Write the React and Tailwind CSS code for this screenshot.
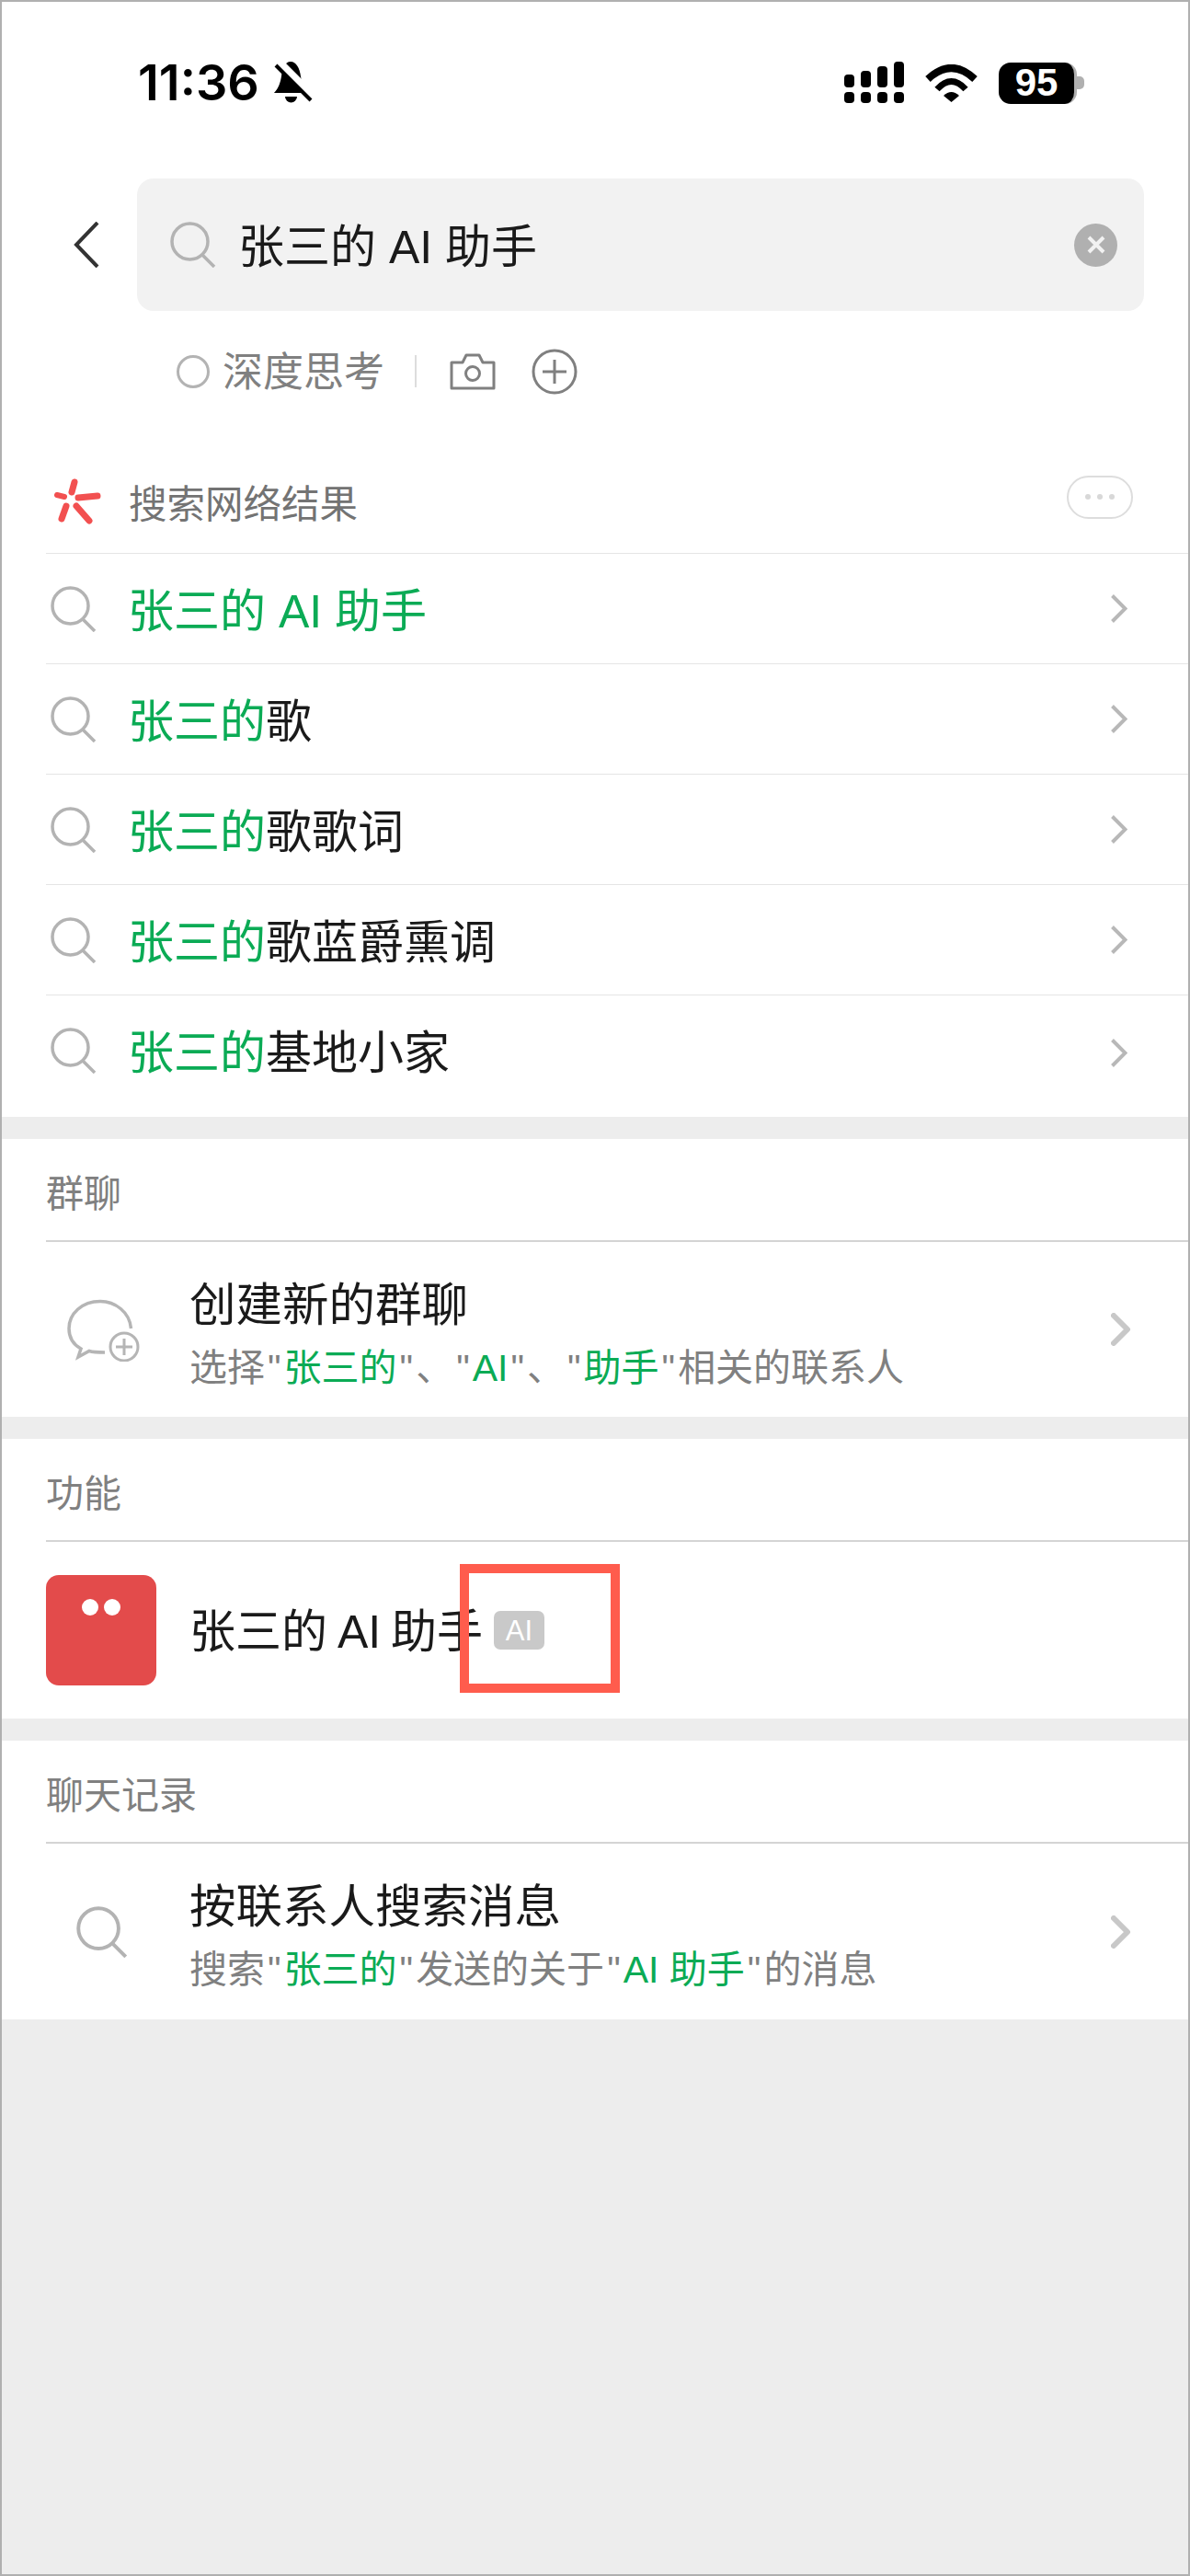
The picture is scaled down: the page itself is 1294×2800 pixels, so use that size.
const green = "text-[#0bab55]";

function SearchIcon({ size = 50 }) {
  return (
    <svg width={size} height={size} viewBox="0 0 50 50" fill="none" stroke="#b3b3b3" strokeWidth="3.5" className="shrink-0">
      <circle cx="21.5" cy="21.5" r="19.5" />
      <path d="M35 36 L48 49" />
    </svg>
  );
}

function Chevron({ big }) {
  if (big) {
    return (
      <svg width="22" height="36" viewBox="0 0 22 36" fill="none" stroke="#c8c8c8" strokeWidth="6" strokeLinecap="round" strokeLinejoin="round" className="shrink-0">
        <path d="M3 3 L18 18 L3 33" />
      </svg>
    );
  }
  return (
    <svg width="18" height="31" viewBox="0 0 18 31" fill="none" stroke="#b8b8b8" strokeWidth="4" className="shrink-0">
      <path d="M1.5 1.5 L15.5 15.5 L1.5 29.5" />
    </svg>
  );
}

function StatusBar() {
  return (
    <div className="h-[192px] pt-[60px] pl-[148px] pr-[113px]">
      <div className="h-[56px] flex items-center justify-between">
        <div className="flex items-center">
          <span className="w-[134px] whitespace-nowrap font-['Inter',sans-serif] text-[54px] leading-none font-semibold text-black">11:36</span>
          <svg width="70" height="70" viewBox="0 0 70 70" className="-ml-[1px] shrink-0">
            <path d="M33 12 C39 12 43 19 44 28 C45 36 50 42 54 46 L15 46 C20 41 22 34 23 28 C24 19 27 12 33 12 Z" fill="#000" />
            <path d="M27 50 H40 A6.5 6.5 0 0 1 27 50 Z" fill="#000" />
            <path d="M18 11 L60 53" stroke="#fff" strokeWidth="10" />
            <path d="M17 16 L55 54" stroke="#000" strokeWidth="4" />
          </svg>
        </div>
        <div className="flex items-center">
          <svg width="66" height="46" viewBox="0 0 66 46" fill="#000" className="shrink-0">
            <rect x="0" y="14" width="11" height="14" rx="4" />
            <rect x="18" y="10" width="11" height="18" rx="4" />
            <rect x="36" y="5" width="11" height="23" rx="4" />
            <rect x="54" y="0" width="11" height="28" rx="4" />
            <rect x="0" y="33" width="11" height="12" rx="4" />
            <rect x="18" y="33" width="11" height="12" rx="4" />
            <rect x="36" y="33" width="11" height="12" rx="4" />
            <rect x="54" y="33" width="11" height="12" rx="4" />
          </svg>
          <svg width="57" height="41" viewBox="0 0 57 41" fill="none" stroke="#000" className="ml-[22px] shrink-0">
            <path d="M3 16 Q28.5 -8 54 16" strokeWidth="8" />
            <path d="M13 27 Q28.5 10 44 27" strokeWidth="7" />
            <path d="M20 34 Q28.5 26 37 34 L28.5 41 Z" fill="#000" stroke="none" />
          </svg>
          <div className="ml-[23px] w-[85px] h-[45px] rounded-[13px] bg-black border-r-[3px] border-[#b0b0b0] flex items-center justify-center">
            <span className="text-[42px] leading-none font-bold text-white">95</span>
          </div>
          <div className="w-[8px] h-[14px] rounded-r-[5px] bg-[#b0b0b0]" />
        </div>
      </div>
    </div>
  );
}

function SearchBar() {
  return (
    <div className="flex items-center h-[144px]">
      <svg width="28" height="50" viewBox="0 0 28 50" fill="none" stroke="#333" strokeWidth="4" className="ml-[78px] shrink-0">
        <path d="M26 1 L3 25 L26 49" />
      </svg>
      <div className="ml-[41px] w-[1095px] h-[144px] rounded-[18px] bg-[#f2f2f2] flex items-center pl-[36px] pr-[29px]">
        <SearchIcon />
        <span className="ml-[24px] pt-[6px] text-[50px] leading-none text-[#1a1a1a]">张三的 AI 助手</span>
        <div className="ml-auto w-[47px] h-[47px] rounded-full bg-[#b0b0b0] flex items-center justify-center">
          <svg width="20" height="20" viewBox="0 0 20 20" stroke="#f2f2f2" strokeWidth="4">
            <path d="M2 2 L18 18 M18 2 L2 18" />
          </svg>
        </div>
      </div>
    </div>
  );
}

function Tools() {
  return (
    <div className="mt-[41px] h-[49px] ml-[190px] flex items-center">
      <div className="w-[36px] h-[36px] rounded-full border-[3.5px] border-[#b3b3b3]" />
      <span className="ml-[14px] pt-[3px] w-[176px] whitespace-nowrap text-[44px] leading-none text-[#808080]">深度思考</span>
      <div className="ml-[33px] w-[2px] h-[35px] bg-[#dddddd]" />
      <svg width="50" height="40" viewBox="0 0 50 40" fill="none" stroke="#808080" strokeWidth="3" className="ml-[36px] shrink-0">
        <path d="M2 10 H14 L18 2 H32 L36 10 H48 V38 H2 Z" strokeLinejoin="round" />
        <circle cx="25" cy="22" r="7.5" />
      </svg>
      <svg width="50" height="50" viewBox="0 0 50 50" fill="none" stroke="#808080" strokeWidth="3" className="ml-[39px] shrink-0">
        <circle cx="25" cy="25" r="23" />
        <path d="M25 12 V38 M12 25 H38" />
      </svg>
    </div>
  );
}

function WebHeader() {
  return (
    <div className="mt-[61px] ml-[48px] h-[112px] flex items-center">
      <svg width="52" height="50" viewBox="0 0 52 50" stroke="#f25050" strokeLinecap="round" className="ml-[8px] shrink-0">
        <path d="M23 4 L20 15" strokeWidth="7" />
        <path d="M27 21 L48 19" strokeWidth="7" />
        <path d="M25 30 L39 46" strokeWidth="7" />
        <path d="M14 30 L9 44" strokeWidth="7" />
        <path d="M4 18 L12 20" strokeWidth="6" />
      </svg>
      <span className="ml-[30px] pt-[8px] text-[41.5px] leading-none text-[#737373]">搜索网络结果</span>
      <div className="ml-auto mr-[60px] -mt-[10px] w-[72px] h-[47px] rounded-full border-2 border-[#dddddd] flex items-center justify-center gap-[7px]">
        <div className="w-[6px] h-[6px] rounded-full bg-[#d8d8d8]" />
        <div className="w-[6px] h-[6px] rounded-full bg-[#d8d8d8]" />
        <div className="w-[6px] h-[6px] rounded-full bg-[#d8d8d8]" />
      </div>
    </div>
  );
}

const suggestions = [
  ["张三的 AI 助手", ""],
  ["张三的", "歌"],
  ["张三的", "歌歌词"],
  ["张三的", "歌蓝爵熏调"],
  ["张三的", "基地小家"],
];

function SuggestRow({ hit, rest, last }) {
  return (
    <div className="ml-[48px] h-[120px] border-t border-[#e5e5e5] flex items-center pl-[5px] pr-[66px]">
      <SearchIcon />
      <span className="ml-[34px] pt-[6px] text-[50px] leading-none text-[#1a1a1a]">
        <span className={green}>{hit}</span>
        {rest}
      </span>
      <div className={last ? "ml-auto pt-[6px]" : "ml-auto"}>
        <Chevron />
      </div>
    </div>
  );
}

function SectionTitle({ children }) {
  return (
    <div className="ml-[48px] h-[112px] pt-[10px] border-b-2 border-[#d4d4d4] flex items-center text-[41px] leading-none text-[#808080]">
      {children}
    </div>
  );
}

function Quote({ children }) {
  return (
    <>
      <span className="px-[3px]">"</span>
      <span className={green}>{children}</span>
      <span className="px-[3px]">"</span>
    </>
  );
}

function TwoLineItem({ icon, title, heightClass, children }) {
  return (
    <div className={`ml-[48px] flex items-center pr-[62px] ${heightClass}`}>
      <div className="w-[156px] shrink-0">{icon}</div>
      <div className="self-start pt-[35px]">
        <div className="h-[68px] flex items-center text-[50.5px] leading-none text-[#1a1a1a]">{title}</div>
        <div className="h-[68px] flex items-center text-[41px] leading-none text-[#808080] whitespace-pre">{children}</div>
      </div>
      <div className="ml-auto">
        <Chevron big />
      </div>
    </div>
  );
}

export default function App() {
  return (
    <div className="relative w-[1294px] h-[2800px] border-2 border-[#b0b0b0] bg-[#ededed] font-['Liberation_Sans','Noto_Sans_CJK_SC',sans-serif]">
      <div className="bg-white pb-[13px]">
        <StatusBar />
        <SearchBar />
        <Tools />
        <WebHeader />
        {suggestions.map(([hit, rest], i) => (
          <SuggestRow key={hit + rest} hit={hit} rest={rest} last={i === suggestions.length - 1} />
        ))}
      </div>

      <div className="mt-[24px] bg-white">
        <SectionTitle>群聊</SectionTitle>
        <TwoLineItem
          heightClass="h-[190px]"
          title="创建新的群聊"
          icon={
            <svg width="80" height="70" viewBox="30 20 80 70" fill="none" stroke="#b5b5b5" strokeWidth="3.5" className="ml-[22px]">
              <path d="M100.5 54 C99 36 83 24.5 67 24.5 C47 24.5 33 38 33 54 C33 63 37 71 46 76 L43 85 L55 78.5 C60 80 66 80 72 80" />
              <circle cx="93" cy="74" r="15" strokeWidth="3" />
              <path d="M93 65 V83 M84 74 H102" strokeWidth="3" />
            </svg>
          }
        >
          选择<Quote>张三的</Quote>、<Quote>AI</Quote>、<Quote>助手</Quote>相关的联系人
        </TwoLineItem>
      </div>

      <div className="mt-[24px] bg-white">
        <SectionTitle>功能</SectionTitle>
        <div className="ml-[48px] h-[192px] flex items-center">
          <div className="w-[120px] h-[120px] rounded-[14px] bg-[#e34b4b] flex justify-center gap-[6px] pt-[26px] shrink-0">
            <div className="w-[18px] h-[18px] rounded-full bg-white" />
            <div className="w-[18px] h-[18px] rounded-full bg-white" />
          </div>
          <span className="ml-[36px] pt-[4px] w-[322px] whitespace-nowrap text-[50px] leading-none text-[#1a1a1a] [word-spacing:-3px]">张三的 AI 助手</span>
          <div className="ml-[9px] w-[55px] h-[42px] rounded-[7px] bg-[#c9c9c9] flex items-center justify-center text-[31px] leading-none text-white">
            AI
          </div>
        </div>
      </div>

      <div className="mt-[24px] bg-white">
        <SectionTitle>聊天记录</SectionTitle>
        <TwoLineItem
          heightClass="h-[191px]"
          title="按联系人搜索消息"
          icon={
            <div className="ml-[33px]">
              <SearchIcon size={56} />
            </div>
          }
        >
          搜索<Quote>张三的</Quote>发送的关于<Quote>AI 助手</Quote>的消息
        </TwoLineItem>
      </div>

      {/* annotation box over the AI badge */}
      <div className="absolute left-[498px] top-[1698px] w-[174px] h-[140px] border-[10px] border-[#ff5c4d]" />
    </div>
  );
}
